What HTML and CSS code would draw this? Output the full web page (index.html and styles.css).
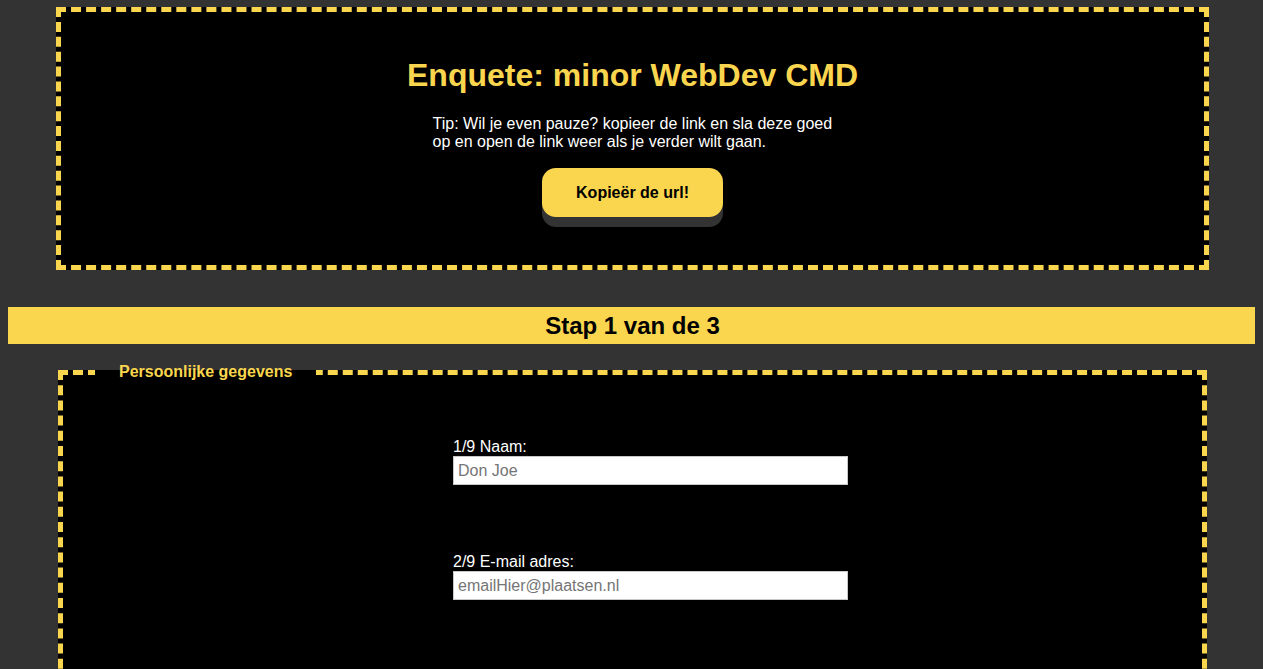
FILE: index.html
```html
<!DOCTYPE html>
<html lang="nl">
<head>
<meta charset="utf-8">
<title>Enquete: minor WebDev CMD</title>
<link rel="stylesheet" href="styles.css">
</head>
<body>
<header class="intro">
  <h1 class="intro-title">Enquete: minor WebDev CMD</h1>
  <p class="intro-tip">Tip: Wil je even pauze? kopieer de link en sla deze goed op en open de link weer als je verder wilt gaan.</p>
  <button class="copy-btn" type="button">Kopieër de url!</button>
</header>

<h2 class="step">Stap 1 van de 3</h2>

<form class="survey">
  <fieldset class="section">
    <legend class="section-title">Persoonlijke gegevens</legend>
    <div class="questions">
      <div class="question">
        <label class="question-label" for="naam">1/9 Naam:</label>
        <input class="question-input" id="naam" type="text" placeholder="Don Joe">
      </div>
      <div class="question">
        <label class="question-label" for="email">2/9 E-mail adres:</label>
        <input class="question-input" id="email" type="email" placeholder="emailHier@plaatsen.nl">
      </div>
      <div class="question">
        <label class="question-label" for="studentnummer">3/9 Studentnummer:</label>
        <input class="question-input" id="studentnummer" type="text" placeholder="500000000">
      </div>
    </div>
  </fieldset>
</form>
</body>
</html>
```
FILE: styles.css
```css
* {
  box-sizing: border-box;
}

body {
  margin: 7px 8px 8px;
  background: #333333;
  font-family: "Liberation Sans", Arial, sans-serif;
  font-size: 16px;
  color: #ffffff;
}

.intro {
  margin: 0 46px 0 48px;
  padding: 45px 0 48px;
  border: 5px dashed #fad64f;
  background: #000000;
  text-align: center;
}

.intro-title {
  margin: 0 0 21px;
  font-size: 32px;
  line-height: 37px;
  font-weight: 700;
  color: #fad64f;
}

.intro-tip {
  width: 400px;
  margin: 0 auto 17px;
  line-height: 18px;
  text-align: left;
  color: #ffffff;
}

.copy-btn {
  display: block;
  width: 181px;
  height: 49px;
  margin: 0 auto;
  border: none;
  border-radius: 14px;
  background: #fad64f;
  box-shadow: 0 10px 0 #333333;
  color: #000000;
  font-family: "Liberation Sans", Arial, sans-serif;
  font-size: 16px;
  font-weight: 700;
  cursor: pointer;
}

.step {
  margin: 37px -2px 0 0;
  height: 37px;
  padding-top: 1px;
  line-height: 36px;
  background: #fad64f;
  color: #000000;
  font-size: 24px;
  font-weight: 700;
  text-align: center;
}

.survey {
  margin: 0;
}

.section {
  margin: 19px 48px 0 50px;
  padding: 0 0 40px 32px;
  border: 5px dashed #fad64f;
  background: #000000;
  min-height: 320px;
}

.section-title {
  padding: 0 24px;
  font-size: 16px;
  line-height: 18px;
  font-weight: 700;
  color: #fad64f;
}

.questions {
  display: flex;
  flex-direction: column;
  gap: 68px;
  width: 395px;
  margin: 57px 0 0 358px;
}

.question {
  display: flex;
  flex-direction: column;
}

.question-label {
  display: block;
  line-height: 18px;
  color: #ffffff;
}

.question-input {
  display: block;
  width: 395px;
  height: 29px;
  margin: 0;
  padding: 0 4px;
  border: 1px solid #c8c8c8;
  border-radius: 0;
  background: #ffffff;
  font-family: "Liberation Sans", Arial, sans-serif;
  font-size: 16px;
  color: #000000;
}

.question-input::placeholder {
  color: #757575;
}
```
